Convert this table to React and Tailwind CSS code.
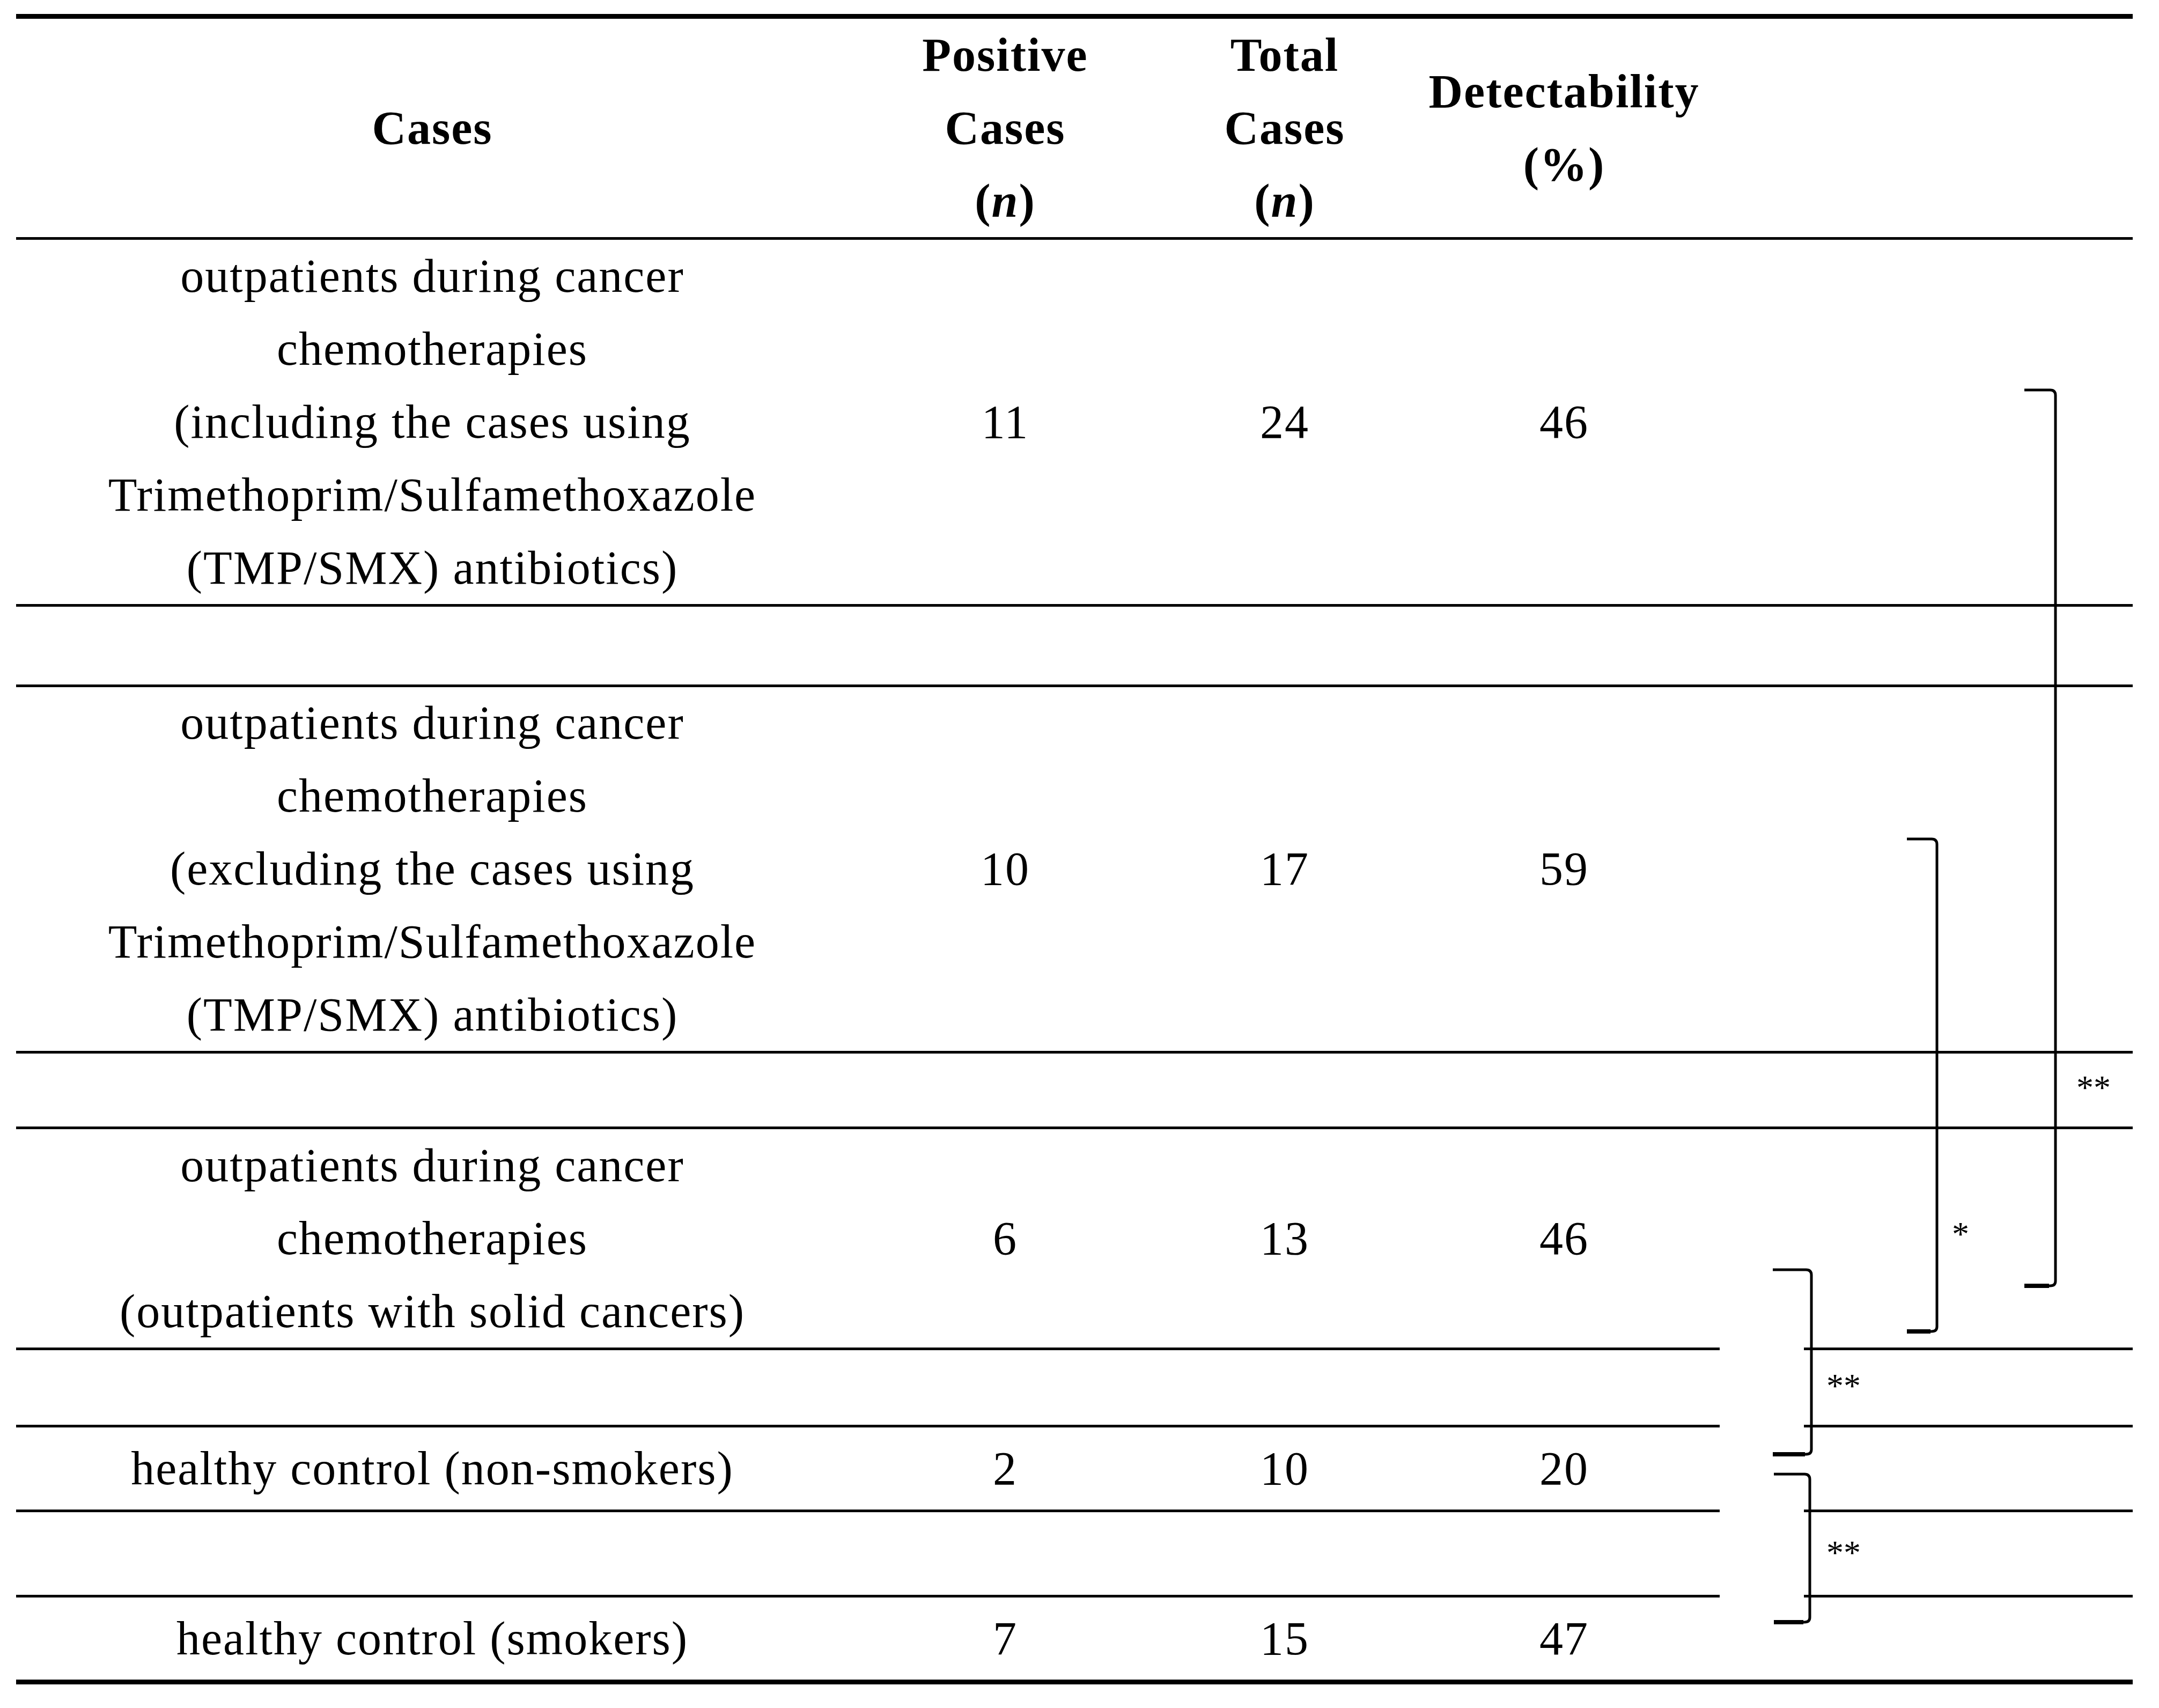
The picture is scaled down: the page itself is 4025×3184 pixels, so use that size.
import React from "react";

const SERIF = "font-['Liberation_Serif',serif]";

const rows = [
  {
    h: "h-[679px]",
    label: ["outpatients during cancer", "chemotherapies", "(including the cases using", "Trimethoprim/Sulfamethoxazole", "(TMP/SMX) antibiotics)"],
    pos: 11, total: 24, det: 46,
  },
  { gap: "h-[145px]" },
  {
    h: "h-[678px]",
    label: ["outpatients during cancer", "chemotherapies", "(excluding the cases using", "Trimethoprim/Sulfamethoxazole", "(TMP/SMX) antibiotics)"],
    pos: 10, total: 17, det: 59,
  },
  { gap: "h-[136px]" },
  {
    h: "h-[407px]",
    label: ["outpatients during cancer", "chemotherapies", "(outpatients with solid cancers)"],
    pos: 6, total: 13, det: 46,
    brokenBelow: true,
  },
  { gap: "h-[139px]", brokenBelow: true },
  { h: "h-[153px]", label: ["healthy control (non-smokers)"], pos: 2, total: 10, det: 20, brokenBelow: true },
  { gap: "h-[154px]", brokenBelow: true },
  { h: "h-[153px]", label: ["healthy control (smokers)"], pos: 7, total: 15, det: 47, last: true },
];

function Rule({ broken }) {
  if (!broken) return <div className="h-[5px] w-full bg-black" />;
  return (
    <div className="flex h-[5px] w-full">
      <div className="w-[3176px] bg-black" />
      <div className="w-[157px]" />
      <div className="flex-1 bg-black" />
    </div>
  );
}

// bracket drawn as a right-hand "]" with soft corners
function Bracket({ w, h, className }) {
  const x = w - 4;
  return (
    <div className={"absolute " + className}>
      <svg width={w} height={h} viewBox={`0 0 ${w} ${h}`}>
        <path
          d={`M0 3 L${x - 10} 3 Q${x} 3 ${x} 13 L${x} ${h - 14} Q${x} ${h - 5} ${x - 10} ${h - 5} L0 ${h - 5}`}
          fill="none"
          stroke="#000"
          strokeWidth="5"
        />
        <line x1="0" y1={h - 5} x2={x - 12} y2={h - 5} stroke="#000" strokeWidth="8" />
      </svg>
    </div>
  );
}

function DataRow({ r }) {
  return (
    <div className={`flex items-center text-center text-[88px] leading-[136px] tracking-[2px] ${r.h}`}>
      <div className="w-[1552px]">
        {r.label.map((l) => (
          <div key={l}>{l}</div>
        ))}
      </div>
      <div className="w-[584px]">{r.pos}</div>
      <div className="w-[458px]">{r.total}</div>
      <div className="w-[584px]">{r.det}</div>
      <div className="flex-1" />
    </div>
  );
}

export default function App() {
  return (
    <div className={`relative min-h-screen w-full bg-white text-black ${SERIF}`}>
      <div className="ml-[30px] w-[3946px] pt-[26px]">
        <div className="h-[9px] w-full bg-black" />

        <div className="flex h-[407px] items-center text-center text-[88px] font-bold leading-[136px] tracking-[2px]">
          <div className="w-[1552px]">Cases</div>
          <div className="w-[584px]">
            <div>Positive</div>
            <div>Cases</div>
            <div>(<i>n</i>)</div>
          </div>
          <div className="w-[458px]">
            <div>Total</div>
            <div>Cases</div>
            <div>(<i>n</i>)</div>
          </div>
          <div className="w-[584px]">
            <div>Detectability</div>
            <div>(%)</div>
          </div>
          <div className="flex-1" />
        </div>
        <Rule />

        {rows.map((r, i) => (
          <React.Fragment key={i}>
            {r.gap ? <div className={r.gap} /> : <DataRow r={r} />}
            {r.last ? <div className="h-[9px] w-full bg-black" /> : <Rule broken={r.brokenBelow} />}
          </React.Fragment>
        ))}
      </div>

      <Bracket className="left-[3774px] top-[724px]" w={62} h={1678} />
      <Bracket className="left-[3555px] top-[1561px]" w={60} h={926} />
      <Bracket className="left-[3305px] top-[2364px]" w={76} h={352} />
      <Bracket className="left-[3307px] top-[2745px]" w={71} h={284} />

      <div className="absolute left-[3871px] top-[1996px] text-[64px] leading-none">**</div>
      <div className="absolute left-[3639px] top-[2269px] text-[64px] leading-none">*</div>
      <div className="absolute left-[3405px] top-[2552px] text-[64px] leading-none">**</div>
      <div className="absolute left-[3405px] top-[2863px] text-[64px] leading-none">**</div>
    </div>
  );
}
